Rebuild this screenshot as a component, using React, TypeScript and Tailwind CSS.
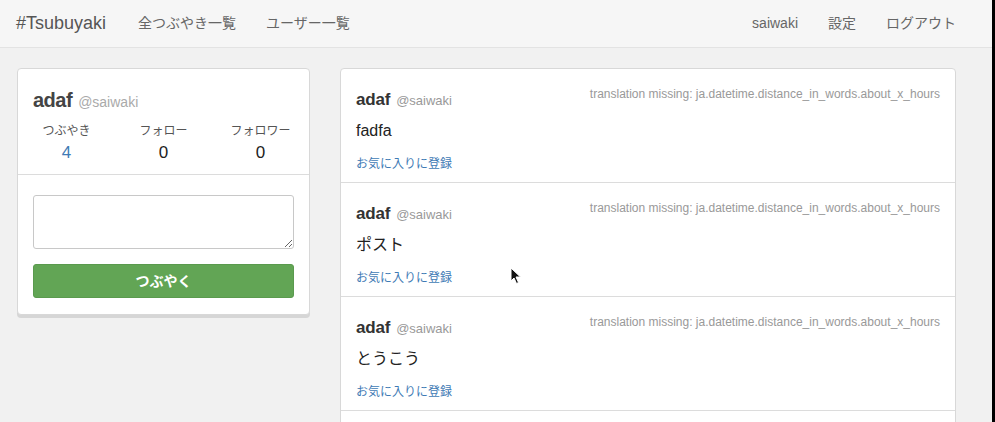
import React from 'react';

const tweets = ['fadfa', 'ポスト', 'とうこう'];

function Tweet({ body }: { body: string }) {
  return (
    <div className="h-[114px] border-b border-[#dcdcdc] px-[15px] pt-[20px]">
      <div className="flex items-start justify-between">
        <div className="flex items-baseline gap-[6px] h-[22px]">
          <span className="text-[17px] font-bold text-[#333] leading-[22px] tracking-[-0.2px]">adaf</span>
          <span className="text-[13px] text-[#999]">@saiwaki</span>
        </div>
        <span className="text-[12px] text-[#999] leading-[12px] -mt-[1px]">
          translation missing: ja.datetime.distance_in_words.about_x_hours
        </span>
      </div>
      <p className="mt-[9px] text-[16px] leading-[22px] text-[#222]">{body}</p>
      <a className="block mt-[14px] text-[12px] leading-[16px] text-[#3f7bb5]">お気に入りに登録</a>
    </div>
  );
}

export default function App() {
  return (
    <div
      className="relative w-[995px] h-[422px] overflow-hidden bg-[#f1f1f1] border-r-[3px] border-black text-[#333]"
      style={{ fontFamily: '"Liberation Sans", Arial, "Noto Sans CJK JP", sans-serif' }}
    >
      {/* Navbar */}
      <nav className="h-[48px] bg-[#f6f6f6] border-b border-[#e3e3e3] flex items-center pl-[16px] pr-[36px]">
        <span className="text-[18px] text-[#555] mr-[32px]">#Tsubuyaki</span>
        <div className="flex gap-[30px] text-[14px] text-[#666]">
          <a>全つぶやき一覧</a>
          <a>ユーザー一覧</a>
        </div>
        <div className="ml-auto flex gap-[30px] text-[14px] text-[#666]">
          <a>saiwaki</a>
          <a>設定</a>
          <a>ログアウト</a>
        </div>
      </nav>

      <div className="flex gap-[30px] pl-[17px] pt-[20px]">
        {/* Profile card */}
        <aside className="w-[293px] h-fit bg-white border border-[#d8d8d8] rounded-[4px] shadow-[0_3px_0_#d6d6d6]">
          <div className="border-b border-[#dcdcdc] pt-[16px] pb-[9px]">
            <div className="px-[15px] flex items-baseline gap-[6px]">
              <span className="text-[20px] font-bold text-[#444] tracking-[-0.5px]">adaf</span>
              <span className="text-[14px] text-[#aaa]">@saiwaki</span>
            </div>
            <div className="grid grid-cols-3 mt-[8px] text-center">
              {[
                ['つぶやき', '4', 'text-[#3f7bb5]'],
                ['フォロー', '0', 'text-[#222]'],
                ['フォロワー', '0', 'text-[#222]'],
              ].map(([label, n, color]) => (
                <div key={label} className="flex flex-col items-center">
                  <span className="text-[12px] text-[#555] leading-[16px]">{label}</span>
                  <span className={`text-[17px] leading-[24px] mt-[2px] ${color}`}>{n}</span>
                </div>
              ))}
            </div>
          </div>
          <div className="px-[15px] pt-[20px] pb-[16px]">
            <textarea className="block w-full h-[54px] border border-[#c8c8c8] rounded-[3px] bg-white resize-y" />
            <button className="mt-[15px] w-full h-[34px] rounded-[3px] bg-[#62a555] border border-[#5a9a4e] text-white text-[14px] font-bold">
              つぶやく
            </button>
          </div>
        </aside>

        {/* Timeline */}
        <main className="w-[616px] bg-white border border-[#d8d8d8] rounded-t-[4px]">
          {tweets.map((t, i) => (
            <Tweet key={i} body={t} />
          ))}
          <div className="h-[114px]" />
        </main>
      </div>

      {/* Mouse cursor */}
      <svg className="absolute left-[510px] top-[267px]" width="12" height="18" viewBox="0 0 12 18">
        <path d="M1 1 L1 14 L4 11 L6.5 16.5 L8.5 15.5 L6 10 L10.5 10 Z" fill="#111" stroke="#fff" strokeWidth="1" />
      </svg>
    </div>
  );
}
